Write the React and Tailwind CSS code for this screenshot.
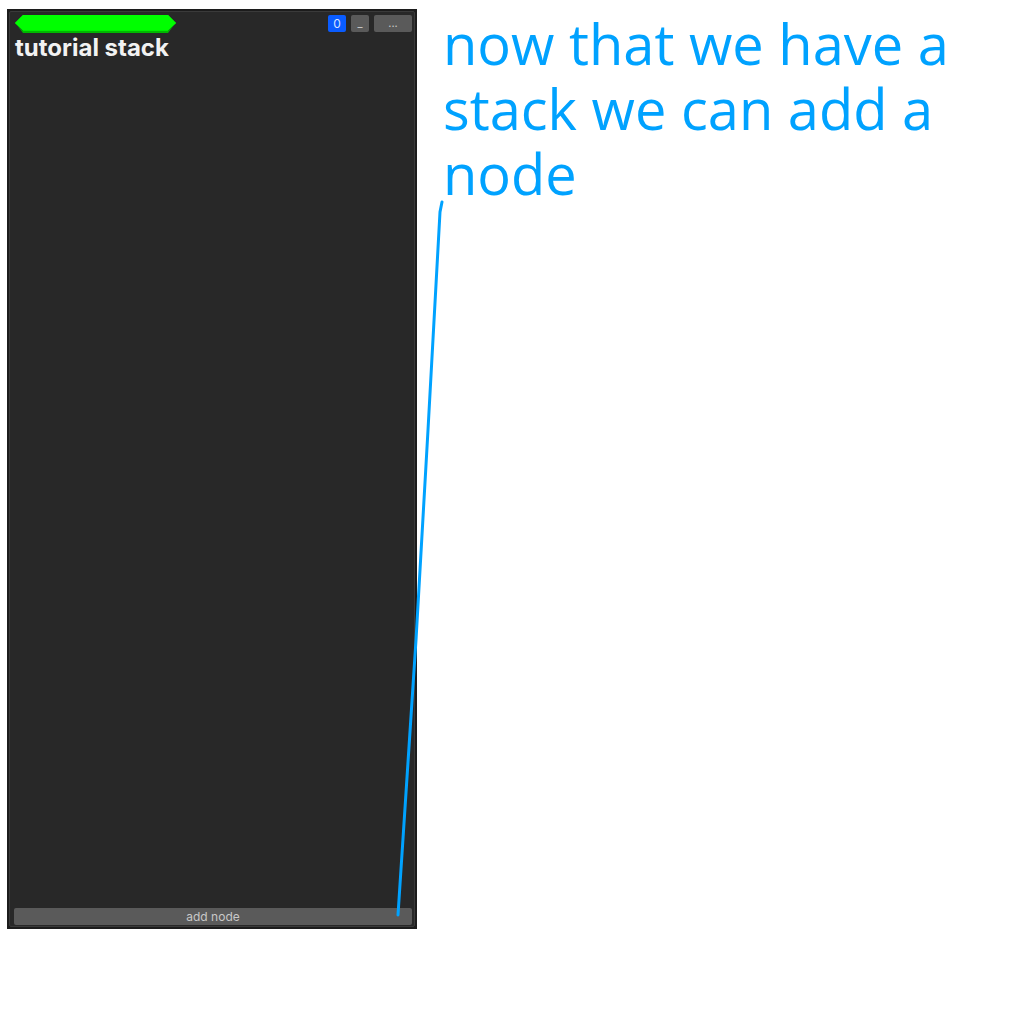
import React from "react";

const LINES = ["now that we have a", "stack we can add a", "node"];

function StackPanel() {
  return (
    <div className="ml-[7px] mt-[9px] h-[920px] w-[410px] shrink-0 bg-[#1c1c1c] p-[2px]">
      <div className="flex h-full flex-col rounded-[2px] border border-[#3a3a3a] bg-[#282828] pb-px pl-[4px] pr-[2px] pt-[3px]">
        {/* header */}
        <div className="flex items-start justify-between">
          <svg width="161" height="18" viewBox="0 0 161 18" className="ml-px">
            <polygon points="0,8 8,0 153,0 161,8 153,16 8,16" fill="#00f000" />
            <polygon points="0,8 8,0 153,0 161,8 153,15 8,15" fill="#00ff00" />
            <polygon points="2,10 8,16 153,16 159,10 153,18 8,18" fill="#00b800" />
          </svg>
          <div className="flex gap-[5px]" style={{ fontFamily: "Inter, 'Liberation Sans', sans-serif" }}>
            <div className="flex h-[17px] w-[18px] items-center justify-center rounded-[2px] bg-[#0a5cff] text-[12px] leading-none text-[#d6e4ff]">
              0
            </div>
            <div className="flex h-[17px] w-[18px] items-end justify-center rounded-[2px] bg-[#5a5a5a] pb-[3px] text-[11px] leading-none text-[#c8c8c8]">
              _
            </div>
            <div className="flex h-[17px] w-[38px] items-center justify-center rounded-[2px] bg-[#5a5a5a] text-[11px] leading-none text-[#c8c8c8]">
              ...
            </div>
          </div>
        </div>
        <div
          className="ml-px mt-[3px] text-[24px] font-bold leading-[24px] text-[#f2f2f2]"
          style={{ fontFamily: "Inter, 'Liberation Sans', sans-serif" }}
        >
          tutorial stack
        </div>
        <div className="flex-1" />
        <button
          className="h-[17px] w-full rounded-[2px] bg-[#5a5a5a] text-[12px] leading-[17px] text-[#c8c8c8]"
          style={{ fontFamily: "Inter, 'Liberation Sans', sans-serif" }}
        >
          add node
        </button>
      </div>
    </div>
  );
}

export default function App() {
  return (
    <div className="relative h-[1032px] w-[1032px] overflow-hidden bg-white">
      <div className="flex items-start">
        <StackPanel />
        <div
          className="ml-[26px] mt-[11px] text-[56px] leading-[65px] text-[#00a2ff]"
          style={{ fontFamily: "'Open Sans', 'Noto Sans', sans-serif" }}
        >
          {LINES.map((l) => (
            <div key={l} className="whitespace-nowrap">{l}</div>
          ))}
        </div>
      </div>

      {/* annotation pointer */}
      <svg className="pointer-events-none absolute inset-0" width="1032" height="1032">
        <path d="M442 202 L440 212 L428 430 L416 640 L398 915" fill="none" stroke="#00a2ff" strokeWidth="3" strokeLinecap="round" />
      </svg>
    </div>
  );
}
